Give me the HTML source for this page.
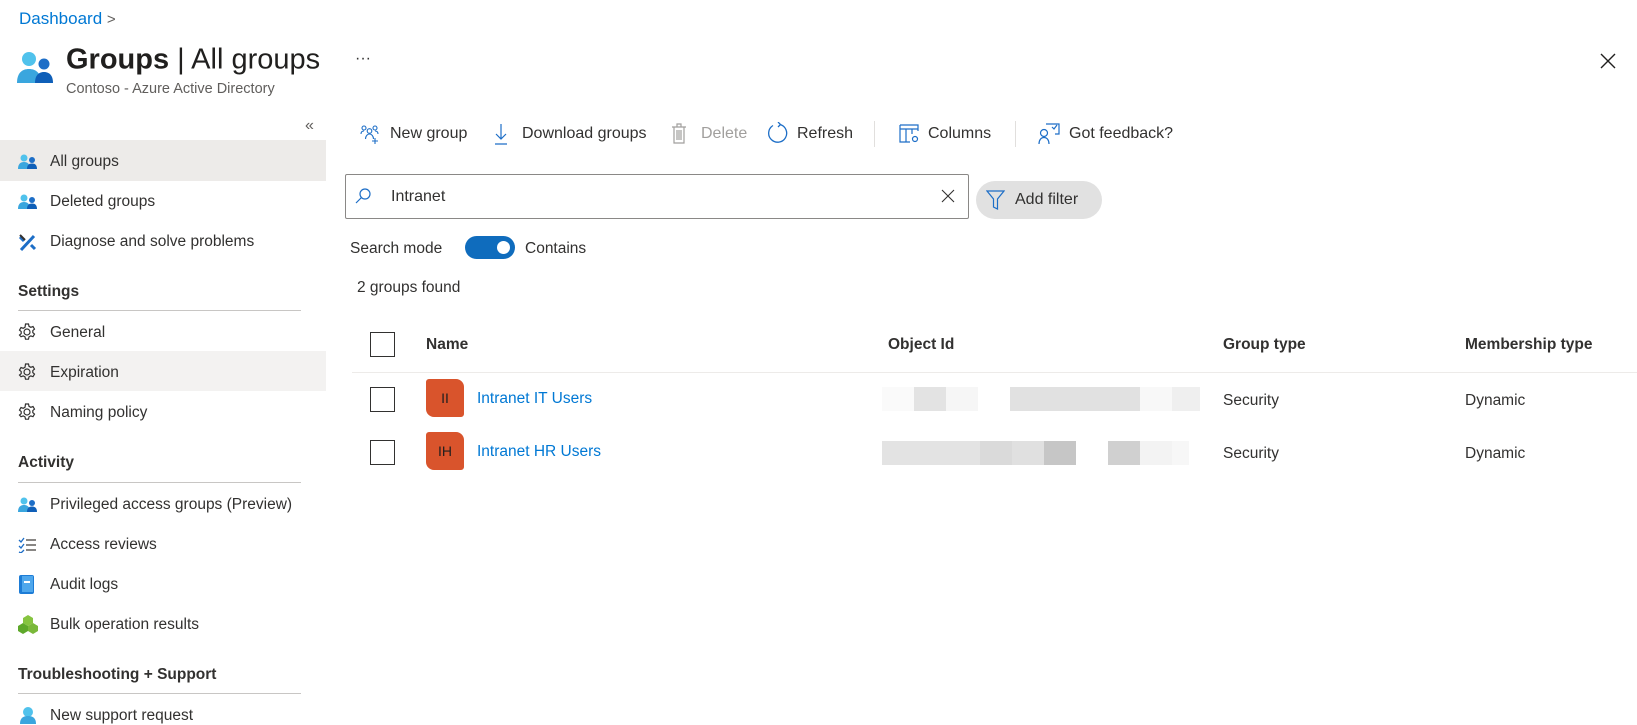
<!DOCTYPE html>
<html><head><meta charset="utf-8"><style>
*{margin:0;padding:0;box-sizing:border-box}
body{width:1637px;height:722px;overflow:hidden;background:#fff;font-family:"Liberation Sans",sans-serif;color:#323130;position:relative;font-size:15.5px}
.a{position:absolute;white-space:nowrap}
.t{transform:translateY(-50%)}
.hl{position:absolute;left:0;width:326px;background:#edebe9}
.sec{font-weight:bold;font-size:15.5px}
.ln{position:absolute;left:18px;width:283px;height:1px;background:#c8c6c4}
.blue{color:#0078d4}
.cb{position:absolute;width:25px;height:25px;border:1.5px solid #323130;background:#fff}
.av{position:absolute;width:38px;height:38px;background:#d9542c;border-radius:3px 8px 3px 8px;color:#201f1e;font-size:14px;display:flex;align-items:center;justify-content:center}
.bl{position:absolute;height:24px}
</style></head><body>
<div class="a t blue" style="left:19px;top:19px;font-size:17px">Dashboard <span style="color:#605e5c;font-size:15px">&gt;</span></div>
<svg class="a" style="left:17px;top:49px" width="37" height="37" viewBox="0 0 37 37">
<circle cx="12" cy="10" r="7" fill="#50c2ec"/><path d="M0 34c0-10 5-14 12-14s12 4 12 14z" fill="#3aa6de"/>
<circle cx="27" cy="15" r="5.5" fill="#1d6ec7"/><path d="M18 34c0-8 4-11 9-11s9 3 9 11z" fill="#0f5fb8"/></svg>
<div class="a t" style="left:66px;top:60px;font-size:29px;color:#201f1e"><b style="font-weight:600">Groups</b> | All groups</div>
<div class="a t" style="left:66px;top:89px;font-size:14.5px;color:#605e5c">Contoso - Azure Active Directory</div>
<div class="a t" style="left:355px;top:59px;font-size:16px">···</div>
<svg class="a" style="left:1600px;top:53px" width="16" height="16"><path d="M1 1L15 15M15 1L1 15" stroke="#201f1e" stroke-width="1.4"/></svg>
<div class="a t" style="left:305px;top:126px;font-size:16px;color:#605e5c">«</div>

<div class="hl" style="top:140px;height:41px"></div>
<div class="hl" style="top:351px;height:40px;background:#f3f2f1"></div>
<svg width="0" height="0" style="position:absolute"><defs>
<g id="grp"><circle cx="6" cy="5" r="3.5" fill="#50c2ec"/><path d="M0 16c0-5 2.5-7 6-7s6 2 6 7z" fill="#3aa6de"/><circle cx="14" cy="7" r="3" fill="#1d6ec7"/><path d="M9 16c0-4 2-5.5 5-5.5s5 1.5 5 5.5z" fill="#0f5fb8"/></g>
<g id="gear" fill="none" stroke="#323130" stroke-width="1.2"><circle cx="9" cy="9" r="3"/><path d="M7.5 1h3l.5 2.3 1.8 1 2.2-.8 1.5 2.6-1.7 1.5v2l1.7 1.5-1.5 2.6-2.2-.8-1.8 1-.5 2.3h-3l-.5-2.3-1.8-1-2.2.8L1.5 12.1 3.2 10.6v-2L1.5 7.1 3 4.5l2.2.8 1.8-1z"/></g>
</defs></svg>
<svg class="a" style="left:18px;top:153px" width="20" height="17"><use href="#grp"/></svg>
<div class="a t" style="left:50px;top:162px">All groups</div>
<svg class="a" style="left:18px;top:193px" width="20" height="17"><use href="#grp"/></svg>
<div class="a t" style="left:50px;top:202px">Deleted groups</div>
<svg class="a" style="left:18px;top:233px" width="19" height="19"><path d="M3 17L16 3M2 4l4 4M13 12l4 4" stroke="#1d6ec7" stroke-width="3"/><path d="M2 2l5 5" stroke="#323130" stroke-width="2"/></svg>
<div class="a t" style="left:50px;top:242px">Diagnose and solve problems</div>
<div class="a t sec" style="left:18px;top:292px">Settings</div><div class="ln" style="top:310px"></div>
<svg class="a" style="left:18px;top:323px" width="19" height="19"><use href="#gear"/></svg>
<div class="a t" style="left:50px;top:333px">General</div>
<svg class="a" style="left:18px;top:363px" width="19" height="19"><use href="#gear"/></svg>
<div class="a t" style="left:50px;top:373px">Expiration</div>
<svg class="a" style="left:18px;top:403px" width="19" height="19"><use href="#gear"/></svg>
<div class="a t" style="left:50px;top:413px">Naming policy</div>
<div class="a t sec" style="left:18px;top:463px">Activity</div><div class="ln" style="top:482px"></div>
<svg class="a" style="left:18px;top:496px" width="20" height="17"><use href="#grp"/></svg>
<div class="a t" style="left:50px;top:505px">Privileged access groups (Preview)</div>
<svg class="a" style="left:18px;top:537px" width="19" height="16"><path d="M1 3l2 2 3-4M1 9l2 2 3-4M1 15l2 1 3-3" stroke="#1d6ec7" fill="none" stroke-width="1.3"/><path d="M8 3h10M8 8h10M8 13h10" stroke="#605e5c" stroke-width="1.4"/></svg>
<div class="a t" style="left:50px;top:545px">Access reviews</div>
<svg class="a" style="left:19px;top:575px" width="16" height="19"><rect x="0" y="0" width="15" height="19" rx="2" fill="#1d7cd6"/><rect x="3" y="1" width="11" height="16" fill="#4fa7ec"/><rect x="5" y="6" width="6" height="2" fill="#fff"/></svg>
<div class="a t" style="left:50px;top:585px">Audit logs</div>
<svg class="a" style="left:18px;top:615px" width="20" height="19"><path d="M10 0l5 3v5l-5 3-5-3V3z" fill="#86c440"/><path d="M5 8l5 3v5l-5 3-5-3v-5z" fill="#5ea82a"/><path d="M15 8l5 3v5l-5 3-5-3v-5z" fill="#7ab83a"/></svg>
<div class="a t" style="left:50px;top:625px">Bulk operation results</div>
<div class="a t sec" style="left:18px;top:675px">Troubleshooting + Support</div><div class="ln" style="top:693px"></div>
<svg class="a" style="left:19px;top:706px" width="18" height="18"><circle cx="9" cy="6" r="5" fill="#50c2ec"/><path d="M1 18c0-6 3-8 8-8s8 2 8 8z" fill="#3aa6de"/></svg>
<div class="a t" style="left:50px;top:716px">New support request</div>

<!-- toolbar -->
<svg class="a" style="left:360px;top:124px" width="20" height="20" fill="none" stroke="#1d6ec7" stroke-width="1.1"><circle cx="4" cy="4" r="2"/><circle cx="15" cy="4" r="2"/><circle cx="9.5" cy="7" r="2.3"/><path d="M1 10c0-2 1-3 3-3M18 10c0-2-1-3-3-3M5.5 15c0-3 2-5 4-5s4 2 4 5"/><path d="M15 14v6M12 17h6"/></svg>
<div class="a t" style="left:390px;top:134px;font-size:16px">New group</div>
<svg class="a" style="left:494px;top:123px" width="14" height="22" stroke="#1d6ec7" fill="none" stroke-width="1.2"><path d="M7 1v15M2 11l5 5 5-5M1 21h12"/></svg>
<div class="a t" style="left:522px;top:134px;font-size:16px">Download groups</div>
<svg class="a" style="left:671px;top:123px" width="16" height="21" stroke="#a19f9d" fill="none" stroke-width="1.2"><path d="M1 4h14M6 4V1h4v3M3 4v16h10V4M6 7v10M8 7v10M10 7v10"/></svg>
<div class="a t" style="left:701px;top:134px;font-size:16px;color:#a19f9d">Delete</div>
<svg class="a" style="left:767px;top:122px" width="22" height="23" fill="none" stroke="#1d6ec7" stroke-width="1.3"><path d="M13 2.5A9 9 0 1 1 6 3.5"/><path d="M11 0l2.5 2.5L11 5"/></svg>
<div class="a t" style="left:797px;top:134px;font-size:16px">Refresh</div>
<div class="a" style="left:874px;top:121px;width:1px;height:26px;background:#e1dfdd"></div>
<svg class="a" style="left:899px;top:124px" width="21" height="20" fill="none" stroke="#1d6ec7" stroke-width="1.2"><path d="M1 1h18v6M1 1v17h10M1 5h18M7 5v13M13 5v5"/><circle cx="16" cy="15" r="2.5"/></svg>
<div class="a t" style="left:928px;top:134px;font-size:16px">Columns</div>
<div class="a" style="left:1015px;top:121px;width:1px;height:26px;background:#e1dfdd"></div>
<svg class="a" style="left:1038px;top:123px" width="22" height="22" fill="none" stroke="#1d6ec7" stroke-width="1.2"><path d="M8 1h13v10h-4M14 4l2 2 3-4"/><circle cx="6" cy="10" r="3.5"/><path d="M1 21c0-4 2-6.5 5-6.5s5 2.5 5 6.5"/></svg>
<div class="a t" style="left:1069px;top:134px;font-size:16px">Got feedback?</div>

<!-- search -->
<div class="a" style="left:345px;top:174px;width:624px;height:45px;border:1px solid #8a8886;border-radius:2px"></div>
<svg class="a" style="left:355px;top:188px" width="16" height="16" fill="none" stroke="#1d6ec7" stroke-width="1.2"><circle cx="10" cy="6" r="5"/><path d="M6.5 9.5L1 15"/></svg>
<div class="a t" style="left:391px;top:197px;font-size:16px">Intranet</div>
<svg class="a" style="left:941px;top:189px" width="14" height="14"><path d="M1 1L13 13M13 1L1 13" stroke="#323130" stroke-width="1.1"/></svg>
<div class="a" style="left:976px;top:181px;width:126px;height:38px;border-radius:19px;background:#e1e1e1"></div>
<svg class="a" style="left:986px;top:190px" width="19" height="21" fill="none" stroke="#1d6ec7" stroke-width="1.2"><path d="M1 1h17l-6.5 8v10l-4-2V9z"/></svg>
<div class="a t" style="left:1015px;top:200px;font-size:16px">Add filter</div>
<div class="a t" style="left:350px;top:249px;font-size:15.5px">Search mode</div>
<div class="a" style="left:465px;top:236px;width:50px;height:23px;border-radius:12px;background:#0f6cbd"></div>
<div class="a" style="left:497px;top:241px;width:13px;height:13px;border-radius:50%;background:#fff"></div>
<div class="a t" style="left:525px;top:249px;font-size:15.5px">Contains</div>
<div class="a t" style="left:357px;top:288px;font-size:15.5px">2 groups found</div>

<!-- table -->
<div class="cb" style="left:370px;top:332px"></div>
<div class="a t" style="left:426px;top:345px;font-weight:600">Name</div>
<div class="a t" style="left:888px;top:345px;font-weight:600">Object Id</div>
<div class="a t" style="left:1223px;top:345px;font-weight:600">Group type</div>
<div class="a t" style="left:1465px;top:345px;font-weight:600">Membership type</div>
<div class="a" style="left:352px;top:372px;width:1285px;height:1px;background:#edebe9"></div>

<div class="cb" style="left:370px;top:387px"></div>
<div class="av" style="left:426px;top:379px">II</div>
<div class="a t blue" style="left:477px;top:399px">Intranet IT Users</div>
<div class="bl" style="left:882px;top:387px;width:32px;background:#fafafa"></div>
<div class="bl" style="left:914px;top:387px;width:32px;background:#e3e3e3"></div>
<div class="bl" style="left:946px;top:387px;width:32px;background:#f6f6f6"></div>
<div class="bl" style="left:1010px;top:387px;width:130px;background:#e1e1e1"></div>
<div class="bl" style="left:1140px;top:387px;width:32px;background:#f8f8f8"></div>
<div class="bl" style="left:1172px;top:387px;width:28px;background:#efefef"></div>
<div class="a t" style="left:1223px;top:401px">Security</div>
<div class="a t" style="left:1465px;top:401px">Dynamic</div>

<div class="cb" style="left:370px;top:440px"></div>
<div class="av" style="left:426px;top:432px">IH</div>
<div class="a t blue" style="left:477px;top:452px">Intranet HR Users</div>
<div class="bl" style="left:882px;top:441px;width:98px;background:#e3e3e3"></div>
<div class="bl" style="left:980px;top:441px;width:32px;background:#dadada"></div>
<div class="bl" style="left:1012px;top:441px;width:32px;background:#e0e0e0"></div>
<div class="bl" style="left:1044px;top:441px;width:32px;background:#c6c6c6"></div>
<div class="bl" style="left:1108px;top:441px;width:32px;background:#d0d0d0"></div>
<div class="bl" style="left:1140px;top:441px;width:32px;background:#f3f3f3"></div>
<div class="bl" style="left:1172px;top:441px;width:17px;background:#f7f7f7"></div>
<div class="a t" style="left:1223px;top:454px">Security</div>
<div class="a t" style="left:1465px;top:454px">Dynamic</div>
</body></html>
